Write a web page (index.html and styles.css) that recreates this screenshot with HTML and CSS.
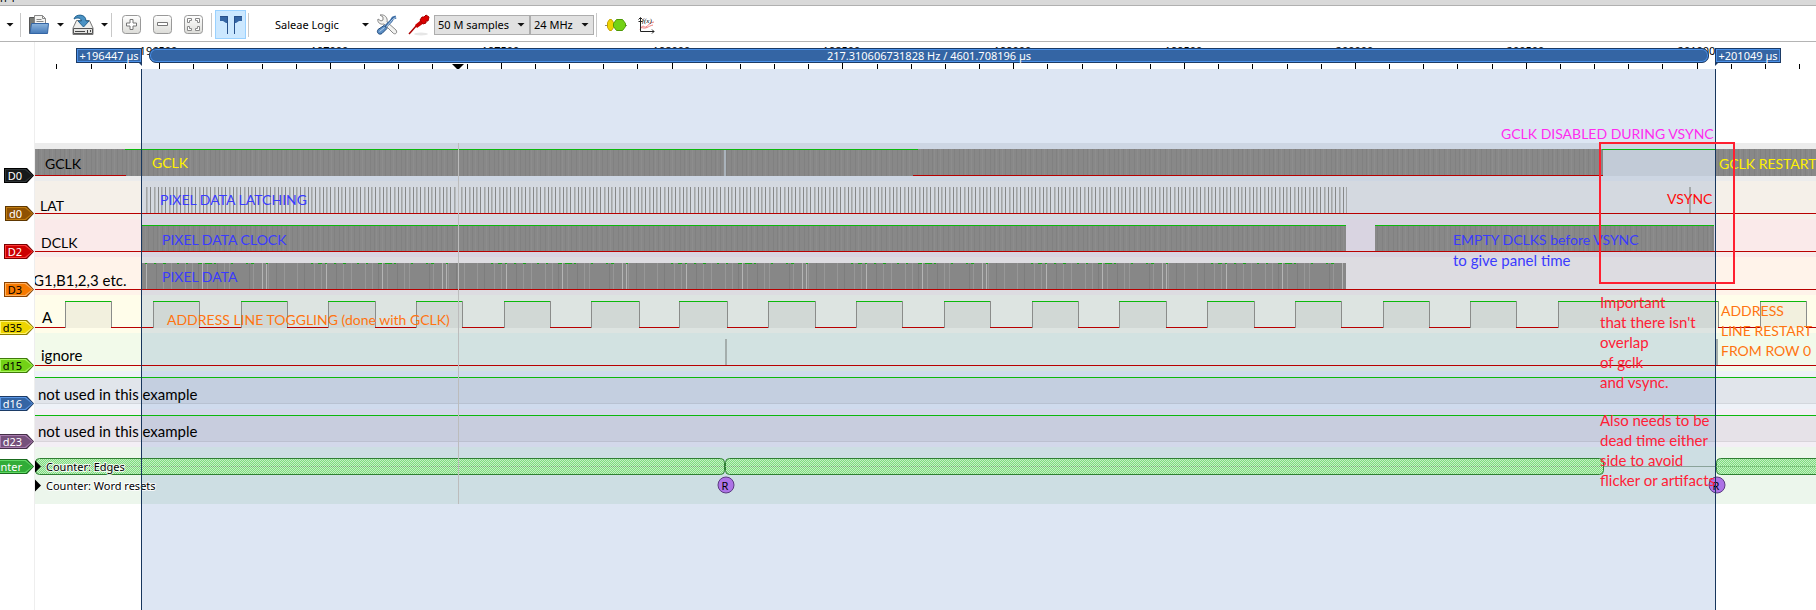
FILE: index.html
```html
<!DOCTYPE html>
<html lang="en">
<head>
<meta charset="utf-8">
<title>Session 1</title>
<link rel="stylesheet" href="styles.css">
</head>
<body>
<svg class="defs" aria-hidden="true">
  <defs>
    <pattern id="dense" width="31" height="38" patternUnits="userSpaceOnUse">
      <rect width="31" height="38" fill="#888"/>
      <path d="M2.500 0v38M7.500 0v38M13.500 0v38M18.500 0v38M24.500 0v38M29.500 0v38" stroke="#818181"/>
      <path d="M4.500 0v38M10.500 0v38M21.500 0v38" stroke="#8d8d8d"/>
    </pattern>
    <pattern id="latch" width="15" height="38" patternUnits="userSpaceOnUse">
      <path d="M.5 0v38M8.500 0v38" stroke="#868888"/>
      <path d="M4.500 0v38M11.500 0v38" stroke="#a3a6a7"/>
      <path d="M5.500 0v38M12.500 0v38" stroke="#b8bcbe"/>
    </pattern>
    <pattern id="data" width="180" height="38" patternUnits="userSpaceOnUse">
      <rect width="180" height="38" fill="#878787"/>
      <path d="M5.500 0v38M12.500 0v38M27.500 0v38M44.500 0v38M49.500 0v38M73.500 0v38M88.500 0v38M104.500 0v38M117.500 0v38M134.500 0v38M141.500 0v38M163.500 0v38M171.500 0v38" stroke="#979797"/>
      <path d="M18.500 0v38M37.500 0v38M69.500 0v38M96.500 0v38M124.500 0v38M156.500 0v38" stroke="#7d7d7d"/>
      <path d="M22.500 0v38M82.500 0v38M86.500 0v38M146.500 0v38" stroke="#b4b4b4"/>
    </pattern>
    <pattern id="dashes" width="180" height="38" patternUnits="userSpaceOnUse">
      <path d="M6 6.500h2M18 6.500h4M25 6.500h7M34 6.500h2M51 6.500h2M66 6.500h2M71 6.500h3M86 6.500h2M131 6.500h2M138 6.500h4M145 6.500h2M154 6.500h2M163 6.500h3M177 6.500h2" stroke="#16a516"/>
    </pattern>
    <pattern id="check" width="2" height="2" patternUnits="userSpaceOnUse">
      <rect width="2" height="2" fill="#c3f0c3"/>
      <path d="M0 0h1v1h-1zM1 1h1v1h-1z" fill="#7fdc7f"/>
    </pattern>
    <linearGradient id="btn" x2="0" y2="1"><stop stop-color="#fff"/><stop offset="1" stop-color="#dcdcd8"/></linearGradient>
    <linearGradient id="folder" x2="0" y2="1"><stop stop-color="#8db5dd"/><stop offset="1" stop-color="#4479b8"/></linearGradient>
  </defs>
</svg>

<div class="titlebar">n 1</div>

<div class="toolbar">
  <button class="drop first" aria-label="New session menu"></button>
  <span class="sep"></span>
  <button class="tool open" aria-label="Open">
    <svg width="22" height="22" viewBox="0 0 22 22"><path d="M1.500 19.500V3.500h6v16z" fill="#777a76" stroke="#555"/><path d="M6.500 12V1.500h8l3 3V12z" fill="#f4f4f2" stroke="#888"/><path d="M14.500 1.500v3h3M8.500 5.500h5M8.500 7.500h7" fill="none" stroke="#888"/><path d="M3.500 9.500h17l-1 10h-17.500z" fill="url(#folder)" stroke="#3465a4"/></svg>
  </button>
  <button class="drop" aria-label="Open menu"></button>
  <button class="tool save" aria-label="Save">
    <svg width="22" height="22" viewBox="0 0 22 22"><path d="M4.500 6.500h13l3.500 7.500v6.500h-20v-6.500z" fill="#efefed" stroke="#777"/><path d="M1.500 14.500h19v5h-19z" fill="#e4e4e2" stroke="#555"/><path d="M3 17.500h10M15.500 16v3M18.500 16v2" stroke="#444"/><path d="M2 5C3 0 14-1 14 7h3l-5.500 6L6 7h3.500C9 4 6 3 2 5z" fill="#4a92c4" stroke="#22618e"/></svg>
  </button>
  <button class="drop" aria-label="Save menu"></button>
  <span class="sep"></span>
  <button class="tool zoom" aria-label="Zoom in">
    <svg width="19" height="19" viewBox="0 0 19 19"><rect x=".5" y=".5" width="18" height="18" rx="3" fill="url(#btn)" stroke="#999"/><path d="M8 4.500h3v3.500h3.500v3H11v3.500H8V11H4.500V8H8z" fill="#fff" stroke="#777"/></svg>
  </button>
  <button class="tool zoom" aria-label="Zoom out">
    <svg width="19" height="19" viewBox="0 0 19 19"><rect x=".5" y=".5" width="18" height="18" rx="3" fill="url(#btn)" stroke="#999"/><path d="M4.500 7.500h10v3h-10z" fill="#fff" stroke="#777"/></svg>
  </button>
  <button class="tool zoom" aria-label="Zoom to fit">
    <svg width="19" height="19" viewBox="0 0 19 19"><rect x=".5" y=".5" width="18" height="18" rx="3" fill="url(#btn)" stroke="#999"/><path d="M3.500 3.500h4v2h-2v2h-2zM15.500 3.500h-4v2h2v2h2zM3.500 15.500h4v-2h-2v-2h-2zM15.500 15.500h-4v-2h2v-2h2z" fill="#fff" stroke="#888"/></svg>
  </button>
  <span class="sep"></span>
  <button class="tool cursors" aria-pressed="true" aria-label="Show cursors">
    <svg width="24" height="20" viewBox="0 0 24 20"><path d="M1 1h8v7H7L4 6H1zM23 1h-8v7h2l3-2h3z" fill="#3465a4"/><path d="M1 1.500h7.500V19M23 1.500h-7.500V19" fill="none" stroke="#27508a"/></svg>
  </button>
  <span class="sep"></span>
  <button class="device">Saleae Logic</button>
  <button class="drop" aria-label="Device menu"></button>
  <button class="tool config" aria-label="Configure device">
    <svg width="22" height="22" viewBox="0 0 22 22"><path d="M4 1l3 2v3L5 7 2 5C1 8 4 11 8 10l9 9c2 2 5 0 3-3L11 8c1-4-2-8-7-7z" fill="#f2f2f0" stroke="#888"/><path d="M20 3l-3 1-2 3-6 6" fill="none" stroke="#3b6ca5" stroke-width="3"/><path d="M19.500 3.500l-3 2-6 7" fill="none" stroke="#c3daf1"/><path d="M8 11.500l3 3-5 5c-3 2-6-1-4-4z" fill="#5b8ec4" stroke="#224b7c"/><path d="M3.500 17.500l5-4" stroke="#b9d4ef"/></svg>
  </button>
  <button class="tool probe" aria-label="Configure channels">
    <svg width="22" height="22" viewBox="0 0 22 22"><ellipse cx="13" cy="20" rx="7" ry="1.500" fill="#e6e6e6"/><path d="M1 20l8-9" stroke="#a00" stroke-width="1.500"/><path d="M7 11l6-5 3 3-7 5z" fill="#c00"/><path d="M12 6l2-3 2 0 2-2 3 2-1 4-2 0 0 2-3 1z" fill="#d00" stroke="#a40000"/></svg>
  </button>
  <label class="combo samples"><select aria-label="Sample count"><option>50 M samples</option></select></label>
  <label class="combo rate"><select aria-label="Sample rate"><option>24 MHz</option></select></label>
  <span class="sep"></span>
  <button class="tool decoder" aria-label="Add protocol decoder">
    <svg width="22" height="14" viewBox="0 0 22 14"><path d="M0 7.500h22" stroke="#888"/><path d="M4.500 1.500h2l2 3v5l-2 3h-2l-2-3v-5z" fill="#edd400" stroke="#c4a000"/><path d="M11.500 1.500h6l3 4v3l-3 4h-6l-3-4v-3z" fill="#73d216" stroke="#4e9a06"/></svg>
  </button>
  <button class="tool math" aria-label="Add math signal">
    <svg width="18" height="18" viewBox="0 0 18 18"><path d="M2 14c3-7 4-2 6-3s4-5 8-5M3 11c5 3 7-1 12-2" fill="none" stroke="#f08080"/><path d="M2.500 2v13.500H16M.5 3.500l2-2 2 2M14 13.500l2 2-2 2M.5 5.500h4" fill="none" stroke="#222"/><text class="fx" x="4" y="7">f(x)</text></svg>
  </button>
</div>

<main class="view">
  <div class="labels">
    <div class="slot"><span class="flag c-black">D0</span></div>
    <div class="slot"><span class="flag c-brown">d0</span></div>
    <div class="slot"><span class="flag c-red">D2</span></div>
    <div class="slot"><span class="flag c-orange">D3</span></div>
    <div class="slot"><span class="flag c-yellow">d35</span></div>
    <div class="slot"><span class="flag c-lime">d15</span></div>
    <div class="slot"><span class="flag c-blue">d16</span></div>
    <div class="slot last"><span class="flag c-purple">d23</span></div>
    <div class="slot"><span class="flag c-green">Counter</span></div>
  </div>

  <div class="plot">
    <svg class="ruler" width="100%" height="27">
      <g transform="translate(-35 -42)">
        <g class="ticks" id="ticks"></g>
        <path d="M452 64h12l-6 6z"/>
      </g>
    </svg>
    <div class="zone"></div>
    <div class="rows">
      <svg class="row r-d0" width="100%" height="38"><g transform="translate(-35 0)">
        <rect x="35" y="6" width="1568" height="27" fill="url(#dense)"/>
        <rect x="724" y="7" width="2" height="26" fill="#aab3bb"/>
        <rect class="high" x="1602" y="6" width="114" height="27"/>
        <rect x="1716" y="6" width="3000" height="27" fill="url(#dense)"/>
        <path class="hi" d="M125 6.500H918M1602 6.500h114"/><path class="lo" d="M35 32.500h91M913 32.500h690"/>
      </g></svg>
      <svg class="row r-lat" width="100%" height="38"><g transform="translate(-35 0)">
        <rect x="145" y="6" width="1202" height="26" fill="url(#latch)"/>
        <rect x="1689" y="6" width="2" height="26" fill="#a4a8a9"/>
        <path class="lo" d="M35 32.500h4000"/>
      </g></svg>
      <svg class="row r-dclk" width="100%" height="38"><g transform="translate(-35 0)">
        <rect x="142" y="6" width="1204" height="27" fill="url(#dense)"/>
        <rect x="1375" y="6" width="339" height="27" fill="url(#dense)"/>
        <path class="hi" d="M142 6.500h1204M1375 6.500h339"/><path class="lo" d="M35 32.500h4000"/>
      </g></svg>
      <svg class="row r-data" width="100%" height="38"><g transform="translate(-35 0)">
        <rect x="142" y="6" width="1204" height="26" fill="url(#data)"/>
        <rect x="142" y="6" width="1204" height="1" fill="url(#dashes)"/>
        <path class="lo" d="M35 32.500h4000"/>
      </g></svg>
      <svg class="row r-a" width="100%" height="38"><g transform="translate(-35 0)" id="address"></g></svg>
      <svg class="row r-d15" width="100%" height="38"><g transform="translate(-35 0)">
        <rect x="725" y="6" width="2" height="26" fill="#a4aeac"/><rect x="1716" y="6" width="2" height="26" fill="#a4aeac"/>
        <path class="lo" d="M35 32.500h4000"/>
      </g></svg>
      <svg class="row r-d16" width="100%" height="38"><g transform="translate(-35 0)">
        <rect class="high" x="35" y="7" width="4000" height="26"/><path class="hi" d="M35 6.500h4000"/><path class="base" d="M35 32.500h4000"/>
      </g></svg>
      <svg class="row r-d23" width="100%" height="38"><g transform="translate(-35 0)">
        <rect class="high" x="35" y="7" width="4000" height="26"/><path class="hi" d="M35 6.500h4000"/><path class="base" d="M35 32.500h4000"/>
      </g></svg>
      <svg class="row r-counter" width="100%" height="57"><g transform="translate(-35 0)">
        <path d="M35 19.500h4000" stroke="#8aa39a"/>
        <g class="edges">
          <rect x="35.500" y="11.500" width="689" height="16" rx="4"/>
          <rect x="725.500" y="11.500" width="878" height="16" rx="4"/>
          <rect x="1716.500" y="11.500" width="2400" height="16" rx="4"/>
        </g>
        <path d="M35 19.500h1568M1716 19.500h2400" stroke="#7aa87a" stroke-dasharray="1 1"/>
        <g class="reset"><circle cx="726" cy="38" r="8"/><circle cx="1717" cy="38" r="8"/></g>
        <g class="reset-text"><text x="725" y="43">R</text><text x="1716" y="43">R</text></g>
        <path d="M35 13.500l6 6-6 6zM35 32.500l6 6-6 6z"/>
        <g class="annot"><text x="46" y="24">Counter: Edges</text><text x="46" y="43">Counter: Word resets</text></g>
      </g></svg>
      <div class="hover"></div>
    </div>
    <div class="cursor left"></div>
    <div class="cursor right"></div>
    <div class="span-bar">217.310606731828 Hz / 4601.708196 µs</div>
    <div class="cursor-flag left">+196447 µs</div>
    <div class="cursor-flag right">+201049 µs</div>

    <div class="note caps ink n-gclk">GCLK</div>
    <div class="note caps ink n-lat">LAT</div>
    <div class="note caps ink n-dclk">DCLK</div>
    <div class="note ink n-rgb">G1,B1,2,3 etc.</div>
    <div class="note ink n-a">A</div>
    <div class="note ink n-ignore">ignore</div>
    <div class="note ink n-unused1">not used in this example</div>
    <div class="note ink n-unused2">not used in this example</div>
    <div class="note caps yellow n-gclk2">GCLK</div>
    <div class="note caps blue n-latching">PIXEL DATA LATCHING</div>
    <div class="note caps blue n-clock">PIXEL DATA CLOCK</div>
    <div class="note caps blue n-pixel">PIXEL DATA</div>
    <div class="note caps orange n-toggle">ADDRESS LINE TOGGLING (done with GCLK)</div>
    <div class="note caps magenta n-disabled">GCLK DISABLED DURING VSYNC</div>
    <div class="note caps yellow n-restart">GCLK RESTART</div>
    <div class="note caps red n-vsync">VSYNC</div>
    <div class="note blue n-empty"><span class="caps">EMPTY DCLKS before VSYNC</span><br>to give panel time</div>
    <div class="note rose n-important">Important<br>that there isn't<br>overlap<br>of gclk<br>and vsync.</div>
    <div class="note rose n-dead">Also needs to be<br>dead time either<br>side to avoid<br>flicker or artifacts</div>
    <div class="note caps orange n-address">ADDRESS<br>LINE RESTART<br>FROM ROW 0</div>
    <div class="frame"></div>
  </div>
</main>
<script src="plot.js"></script>
</body>
</html>
```
FILE: styles.css
```css
* { box-sizing: border-box; }
html, body { margin: 0; }
body {
  display: flex;
  flex-direction: column;
  min-height: 100vh;
  background: #fff;
  color: #000;
  font: 11px/16px "Noto Sans", "Open Sans", sans-serif;
  overflow: hidden;
}
svg { display: block; }
.defs { position: absolute; width: 0; height: 0; }

.titlebar {
  display: flex;
  align-items: flex-end;
  height: 6px;
  line-height: 14px;
  overflow: hidden;
  background: #d9d9d9;
  border-bottom: 1px solid #b0b0b0;
}

/* Toolbar */
.toolbar {
  display: flex;
  align-items: center;
  height: 36px;
  padding-top: 2px;
  border-bottom: 1px solid #b4b4b4;
}
.toolbar button {
  display: grid;
  place-items: center;
  flex: none;
  padding: 0;
  border: 0;
  background: none;
  color: inherit;
  font: inherit;
}
.toolbar .drop { width: 21px; height: 24px; }
.toolbar .first { width: 20px; }
.drop::before, .combo::after {
  content: "";
  width: 8px;
  height: 4px;
  background: #111;
  clip-path: polygon(0 0, 100% 0, 50% 100%);
}
.sep { flex: none; width: 1px; height: 24px; background: #c8c8c8; }
.toolbar .open { width: 29px; padding-left: 7px; }
.toolbar .save { width: 23px; }
.toolbar .drop + .sep { margin-right: 4px; margin-left: -4px; }
.toolbar .first + .sep { margin: 0; }
.toolbar .zoom { width: 31px; }
.toolbar .zoom + .sep { margin: 0 3px 0 2px; }
.toolbar .cursors {
  width: 31px;
  height: 29px;
  margin-right: 2px;
  background: #cce8ff;
  border: 1px solid #99d1ff;
}
.toolbar .device { width: 106px; padding-left: 26px; justify-items: start; }
.toolbar .config { width: 22px; }
.toolbar .probe { width: 36px; padding-left: 6px; }
.combo { position: relative; display: flex; flex: none; align-items: center; }
.combo::after { position: absolute; right: 5px; }
.combo select {
  width: 100%;
  height: 20px;
  padding: 0 3px;
  appearance: none;
  border: 1px solid #adadad;
  border-radius: 0;
  background: #e1e1e1;
  color: #000;
  font: inherit;
}
.samples { width: 96px; }
.rate { width: 64px; margin-right: 2px; }
.toolbar .decoder { width: 38px; }
.toolbar .math { width: 24px; }
.fx { font: italic 7px "Liberation Serif", serif; }

/* Main view */
.view { display: flex; flex: 1; }
.labels {
  flex: none;
  width: 35px;
  padding-top: 126px;
  border-right: 1px solid #eee;
  overflow: hidden;
}
.slot { display: flex; justify-content: flex-end; height: 38px; }
.slot.last { height: 25px; }
.flag {
  position: relative;
  z-index: 0;
  flex: none;
  height: 15px;
  padding: 0 12px 0 4px;
  line-height: 15px;
  background: var(--edge);
  clip-path: polygon(0 0, calc(100% - 7px) 0, 100% 50%, calc(100% - 7px) 100%, 0 100%);
}
.flag::before, .flag::after {
  content: "";
  position: absolute;
  z-index: -1;
  inset: 1px;
  background: var(--rim);
  clip-path: inherit;
}
.flag::after { inset: 2px; background: var(--fill); }
.c-black { --edge: #000; --rim: #2e3436; --fill: #16191a; color: #fff; }
.c-brown { --edge: #5e3701; --rim: #c17d11; --fill: #8f5202; color: #fff; }
.c-red { --edge: #7a0000; --rim: #ff3a3a; --fill: #cc0000; color: #fff; }
.c-orange { --edge: #8a4200; --rim: #ffb060; --fill: #f57900; }
.c-yellow { --edge: #8d7e00; --rim: #fff26a; --fill: #edd400; }
.c-lime { --edge: #3f7a0a; --rim: #a6f55a; --fill: #73d216; }
.c-blue { --edge: #1c3b66; --rim: #5b97e6; --fill: #3465a4; color: #fff; }
.c-purple { --edge: #432e47; --rim: #a97cae; --fill: #75507b; color: #fff; }
.c-green { --edge: #1a6b1e; --rim: #5fd864; --fill: #31ac37; color: #fff; }

.plot { position: relative; flex: 1; min-width: 0; overflow: hidden; }
.ticks path { stroke: #000; }
.ticks text { font-size: 11px; text-anchor: middle; }
.zone {
  position: absolute;
  top: 27px;
  bottom: 0;
  left: 107px;
  width: 1573px;
  background: rgba(54, 108, 182, .17);
  z-index: 1;
}
.rows {
  position: relative;
  margin-top: 74px;
  background: linear-gradient(#ececec 38px, #f5f0e9 38px 76px, #faeaea 76px 114px, #fff3ea 114px 152px, #fffdea 152px 190px, #f2faea 190px 228px, #eef2f8 228px 266px, #f3eff5 266px 304px, #ecf6ec 304px);
}
.row { position: relative; z-index: 2; }
.hi { stroke: #0cb80c; fill: none; }
.lo { stroke: #b80000; fill: none; }
.base { stroke: #000; stroke-opacity: .06; }
.high { fill: #000; fill-opacity: .05; }
.wall { stroke: #8a8c8a; }
.edges rect { fill: url(#check); stroke: #2f7f33; }
.reset circle { fill: #ad73e6; stroke: #5b3b80; }
.reset-text text { font-size: 11px; text-anchor: middle; }
.annot text { font-size: 11px; paint-order: stroke; stroke: #fff; stroke-width: 2px; stroke-opacity: .85; }
.hover { position: absolute; z-index: 3; top: 0; bottom: 0; left: 423px; width: 1px; background: #bcbcbc; }

.cursor { position: absolute; z-index: 3; top: 27px; bottom: 0; width: 1px; background: #17365d; }
.cursor.left { left: 106px; }
.cursor.right { left: 1680px; }
.span-bar, .cursor-flag {
  position: absolute;
  z-index: 4;
  top: 6px;
  height: 15px;
  border: 1px solid #1c3b66;
  box-shadow: inset 0 0 0 1px #4a90e8;
  background: #3465a4;
  color: #fff;
  line-height: 14px;
  text-align: center;
  white-space: nowrap;
}
.span-bar { left: 114px; width: 1560px; border-radius: 7px; }
.cursor-flag { width: 66px; }
.cursor-flag.left { left: 41px; }
.cursor-flag.right { left: 1680px; }
.cursor-flag::after {
  content: "";
  position: absolute;
  top: 13px;
  width: 4px;
  height: 4px;
  background: #1c3b66;
}
.cursor-flag.left::after { right: -1px; clip-path: polygon(0 0, 100% 0, 100% 100%); }
.cursor-flag.right::after { left: -1px; clip-path: polygon(0 0, 100% 0, 0 100%); }

/* Hand-written notes pinned on the traces */
.note {
  position: absolute;
  z-index: 5;
  font: 15px/20px Lato, "Open Sans", sans-serif;
  white-space: nowrap;
}
.caps { font-size: 14px; }
.ink { color: #000; }
.yellow { color: #fff200; }
.blue { color: #3a3aff; }
.orange { color: #ff7410; }
.magenta { color: #ff2bef; }
.red { color: #ff0a0a; }
.rose { color: #ff2036; }
.n-gclk { left: 10px; top: 112px; }
.n-lat { left: 5px; top: 154px; }
.n-dclk { left: 6px; top: 191px; }
.n-rgb { left: -2px; top: 228px; }
.n-a { left: 7px; top: 265px; }
.n-ignore { left: 6px; top: 303px; }
.n-unused1 { left: 3px; top: 342px; }
.n-unused2 { left: 3px; top: 379px; }
.n-gclk2 { left: 117px; top: 111px; }
.n-latching { left: 125px; top: 148px; }
.n-clock { left: 127px; top: 188px; }
.n-pixel { left: 127px; top: 225px; }
.n-toggle { left: 132px; top: 268px; }
.n-disabled { left: 1466px; top: 82px; }
.n-restart { left: 1684px; top: 112px; }
.n-vsync { left: 1632px; top: 147px; }
.n-empty { left: 1418px; top: 187px; }
.n-important { left: 1565px; top: 250px; }
.n-dead { left: 1565px; top: 368px; }
.n-address { left: 1686px; top: 259px; }
.frame {
  position: absolute;
  z-index: 5;
  left: 1564px;
  top: 100px;
  width: 136px;
  height: 142px;
  border: 2px solid #ff1f30;
}
```
FILE: plot.js
```js
// Time ruler: a major tick and a label every 500 µs, four minor ticks between.
const ticks = document.getElementById("ticks");
let ruler = "";
for (let k = -3; k <= 120; k++) {
  const x = Math.round(159 + k * 34.17) + 0.5;
  const major = k % 5 === 0;
  ruler += `<path d="M${x} ${major ? 62 : 64}V69"/>`;
  if (major) ruler += `<text x="${x - 1}" y="55">${196500 + k * 100}</text>`;
}
ticks.innerHTML = ruler;

// Address line: [rise, fall] positions of each pulse.
const pulses = [[65, 111], [153, 199], [241, 287], [328, 375], [416, 462], [504, 550],
  [591, 639], [679, 727], [768, 815], [856, 902], [944, 990], [1032, 1078], [1119, 1166],
  [1207, 1254], [1295, 1341], [1383, 1429], [1470, 1516], [1558, 1718], [1760, 1806]];
let wave = "";
let from = 35;
for (const [a, b] of pulses) {
  wave += `<rect class="high" x="${a}" y="6" width="${b - a}" height="27"/>`;
  wave += `<path class="lo" d="M${from} 32.5H${a + 1}"/>`;
  wave += `<path class="wall" d="M${a + 0.5} 6V33M${b + 0.5} 6V33"/>`;
  wave += `<path class="hi" d="M${a} 6.5H${b}"/>`;
  from = b;
}
wave += `<path class="lo" d="M${from} 32.5H4000"/>`;
document.getElementById("address").innerHTML = wave;
```
